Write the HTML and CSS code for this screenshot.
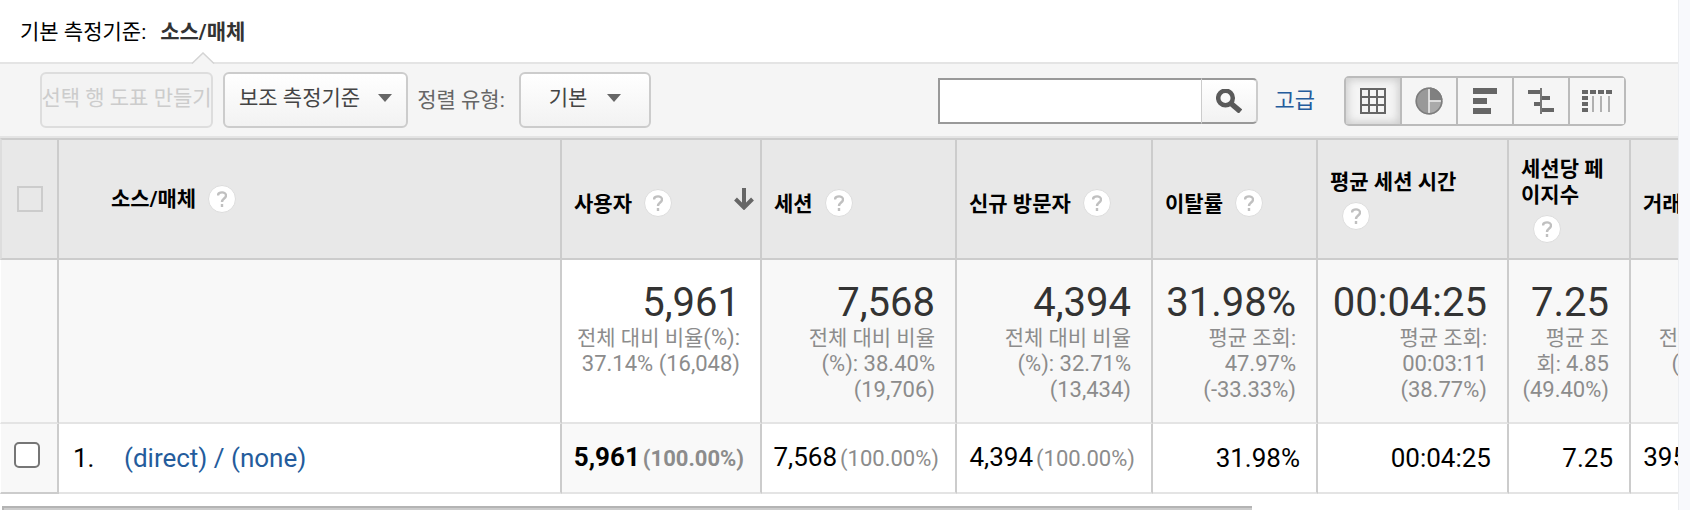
FILE: index.html
```html
<!DOCTYPE html>
<html lang="ko">
<head>
<meta charset="utf-8">
<title>소스/매체</title>
<link rel="stylesheet" href="styles.css">
</head>
<body>
<main class="panel">
  <nav class="dimensions">
    <span>기본 측정기준:</span>
    <strong class="dimension-active">소스/매체
      <svg class="notch" viewBox="0 0 24 12" width="24" height="12" aria-hidden="true"><path d="M1 12L12 1l11 11z" fill="#f5f5f5"/><path d="M1 11.500L12 1l11 10.500" fill="none" stroke="#d4d4d4" stroke-width="1.500"/></svg>
    </strong>
  </nav>

  <div class="toolbar">
    <button class="btn btn-plot" type="button" disabled>선택 행 도표 만들기</button>
    <button class="btn btn-menu" type="button">보조 측정기준
      <svg viewBox="0 0 14 8" width="14" height="8" aria-hidden="true"><path d="M0 0h14L7 8z" fill="#666"/></svg>
    </button>
    <label class="sort-label" for="sort">정렬 유형:</label>
    <div class="select-wrap">
      <select class="btn select" id="sort"><option>기본</option></select>
      <svg class="select-caret" viewBox="0 0 14 8" width="14" height="8" aria-hidden="true"><path d="M0 0h14L7 8z" fill="#666"/></svg>
    </div>
    <form class="search">
      <input class="search-input" type="text" aria-label="검색">
      <button class="search-btn" type="button" aria-label="검색">
        <svg viewBox="0 0 26 24" width="26" height="24" aria-hidden="true"><circle cx="9.500" cy="9" r="7.300" fill="none" stroke="#5a5a5a" stroke-width="4.500"/><path d="M15 14.500L24.500 22.500" stroke="#5a5a5a" stroke-width="5.500"/></svg>
      </button>
    </form>
    <a class="advanced" href="#">고급</a>
    <div class="views">
      <button class="view view-on" type="button" aria-label="표"><svg viewBox="0 0 26 26" width="26" height="26"><path d="M1 1h24v24H1zM9 1v24M17 1v24M1 9h24M1 17h24" fill="none" stroke="#666" stroke-width="2"/></svg></button>
      <button class="view" type="button" aria-label="비율"><svg viewBox="0 0 28 28" width="28" height="28"><circle cx="14" cy="14" r="13.500" fill="#999"/><path d="M14 14h13.500A13.500 13.500 0 0 1 14 27.500z" fill="#aaa"/><path d="M15 .500A13.500 13.500 0 0 1 27.500 13H15z" fill="#808080"/><path d="M14 2v24M14 14h13" stroke="#f0f0f0" stroke-width="1.500"/><circle cx="14" cy="14" r="12.700" fill="none" stroke="#7d7d7d" stroke-width="1.500"/></svg></button>
      <button class="view" type="button" aria-label="실적"><svg viewBox="0 0 26 26" width="26" height="26"><path d="M1 0h24v6H1zM1 10h14v6H1zM1 20h18v6H1z" fill="#666"/></svg></button>
      <button class="view" type="button" aria-label="비교"><svg viewBox="0 0 28 26" width="28" height="26"><path d="M1 2h13v4H1zM14 8h9v4h-9zM7 14h7v4H7zM14 20h13v4H14z" fill="#666"/><path d="M14 0v26" stroke="#777" stroke-width="2"/></svg></button>
      <button class="view" type="button" aria-label="피벗"><svg viewBox="0 0 30 24" width="30" height="24"><path d="M0 1h6v4H0zM8 1h6v4H8zM16 1h6v4h-6zM24 1h6v4h-6zM0 7h6v4H0zM0 13h6v4H0zM0 19h6v4H0z" fill="#666"/><path d="M11 7v16M19 7v16M27 7v16" stroke="#b0b0b0" stroke-width="2"/></svg></button>
    </div>
  </div>

  <table class="report">
    <colgroup>
      <col class="c-check"><col><col class="c-users"><col class="c-sessions"><col class="c-new"><col class="c-bounce"><col class="c-time"><col class="c-pages"><col class="c-trans">
    </colgroup>
    <thead>
      <tr>
        <th class="check-cell"><input class="check-all" type="checkbox" aria-label="모두 선택" disabled></th>
        <th class="source-head"><div class="head-row">소스/매체 <span class="help"><svg viewBox="0 0 10 16" width="10" height="16"><path d="M1 4.500C1 .500 9 .200 9 4.500 9 7.500 5 7.500 5 11M5 13v3" fill="none" stroke="#c0c0c0" stroke-width="2.400"/></svg></span></div></th>
        <th><div class="head-row head-sorted"><div>사용자<span class="help"><svg viewBox="0 0 10 16" width="10" height="16"><path d="M1 4.500C1 .500 9 .200 9 4.500 9 7.500 5 7.500 5 11M5 13v3" fill="none" stroke="#c0c0c0" stroke-width="2.400"/></svg></span></div>
          <svg class="sort-arrow" viewBox="0 0 20 22" width="20" height="22"><path d="M10 0v18M1.500 11L10 19.500 18.500 11" fill="none" stroke="#666" stroke-width="4"/></svg></div></th>
        <th>세션<span class="help"><svg viewBox="0 0 10 16" width="10" height="16"><path d="M1 4.500C1 .500 9 .200 9 4.500 9 7.500 5 7.500 5 11M5 13v3" fill="none" stroke="#c0c0c0" stroke-width="2.400"/></svg></span></th>
        <th>신규 방문자<span class="help"><svg viewBox="0 0 10 16" width="10" height="16"><path d="M1 4.500C1 .500 9 .200 9 4.500 9 7.500 5 7.500 5 11M5 13v3" fill="none" stroke="#c0c0c0" stroke-width="2.400"/></svg></span></th>
        <th>이탈률<span class="help"><svg viewBox="0 0 10 16" width="10" height="16"><path d="M1 4.500C1 .500 9 .200 9 4.500 9 7.500 5 7.500 5 11M5 13v3" fill="none" stroke="#c0c0c0" stroke-width="2.400"/></svg></span></th>
        <th>평균 세션 시간<br><span class="help"><svg viewBox="0 0 10 16" width="10" height="16"><path d="M1 4.500C1 .500 9 .200 9 4.500 9 7.500 5 7.500 5 11M5 13v3" fill="none" stroke="#c0c0c0" stroke-width="2.400"/></svg></span></th>
        <th>세션당 페<br>이지수<br><span class="help"><svg viewBox="0 0 10 16" width="10" height="16"><path d="M1 4.500C1 .500 9 .200 9 4.500 9 7.500 5 7.500 5 11M5 13v3" fill="none" stroke="#c0c0c0" stroke-width="2.400"/></svg></span></th>
        <th>거래<span class="help"><svg viewBox="0 0 10 16" width="10" height="16"><path d="M1 4.500C1 .500 9 .200 9 4.500 9 7.500 5 7.500 5 11M5 13v3" fill="none" stroke="#c0c0c0" stroke-width="2.400"/></svg></span></th>
      </tr>
    </thead>
    <tbody>
      <tr class="summary">
        <td></td>
        <td></td>
        <td class="sorted"><div class="total">5,961</div><div class="note">전체 대비 비율<span class="num">(%):</span><br><span class="num">37.14% (16,048)</span></div></td>
        <td><div class="total">7,568</div><div class="note">전체 대비 비율<br><span class="num">(%): 38.40%<br>(19,706)</span></div></td>
        <td><div class="total">4,394</div><div class="note">전체 대비 비율<br><span class="num">(%): 32.71%<br>(13,434)</span></div></td>
        <td><div class="total">31.98%</div><div class="note">평균 조회:<br><span class="num">47.97%<br>(-33.33%)</span></div></td>
        <td><div class="total">00:04:25</div><div class="note">평균 조회:<br><span class="num">00:03:11<br>(38.77%)</span></div></td>
        <td><div class="total">7.25</div><div class="note">평균 조<br>회: <span class="num">4.85<br>(49.40%)</span></div></td>
        <td><div class="total">&nbsp;</div><div class="note">전체 대비 비율<br><span class="num">(%): 38.40%</span></div></td>
      </tr>
      <tr class="entry">
        <td class="check-cell"><input class="check-row" type="checkbox" aria-label="(direct) / (none)"></td>
        <td class="source"><span class="index">1.</span><a href="#">(direct) / (none)</a></td>
        <td class="sorted">5,961<span class="share">(100.00%)</span></td>
        <td>7,568<span class="share">(100.00%)</span></td>
        <td>4,394<span class="share">(100.00%)</span></td>
        <td>31.98%</td>
        <td>00:04:25</td>
        <td>7.25</td>
        <td>395<span class="share">(100.00%)</span></td>
      </tr>
    </tbody>
  </table>
  <div class="scrollbar"></div>
</main>
</body>
</html>
```
FILE: styles.css
```css
* { box-sizing: border-box; }

body {
  margin: 0;
  background: #f8f9fc;
  color: #000;
  font-family: Roboto, "Noto Sans CJK KR", sans-serif;
  font-size: 21px;
  line-height: 26px;
}

button, input, select { margin: 0; padding: 0; font: inherit; color: inherit; }
a { color: #245c9c; text-decoration: none; }
svg { display: block; flex: none; }

.panel {
  margin-right: 11px;
  border-right: 1px solid #eceef1;
  background: #fff;
  overflow: hidden;
}

.dimensions {
  display: flex;
  align-items: center;
  gap: 14px;
  height: 62px;
  padding: 2px 0 0 20px;
}
.dimension-active {
  position: relative;
  display: flex;
  align-items: center;
  align-self: stretch;
  color: #333;
}
.notch { position: absolute; bottom: -2px; left: 50%; margin-left: -12px; }

.toolbar {
  display: flex;
  align-items: center;
  height: 76px;
  padding: 0 52px 0 40px;
  border-top: 2px solid #e4e4e4;
  border-bottom: 2px solid #e4e4e4;
  background: #f5f5f5;
}
.btn {
  display: flex;
  align-items: center;
  height: 56px;
  padding-bottom: 4px;
  border: 2px solid #ccc;
  border-radius: 6px;
  background: linear-gradient(#fff, #f2f2f2);
  color: #444;
  white-space: nowrap;
}
.btn-plot {
  justify-content: center;
  width: 173px;
  margin-right: 10px;
  border-color: #ddd;
  background: #f3f3f3;
  color: #ccc;
}
.btn-menu { gap: 18px; padding-left: 14px; padding-right: 14px; }
.sort-label { margin: 0 14px 0 9px; color: #666; }
.select-wrap { position: relative; }
.select {
  appearance: none;
  width: 132px;
  padding-left: 28px;
}
.select-caret { position: absolute; right: 30px; top: 22px; pointer-events: none; }

.search { display: flex; height: 46px; margin-left: auto; }
.search-input {
  width: 263px;
  border: 2px solid #999;
  border-right: 0;
  border-radius: 0;
  background: #fff;
}
.search-btn {
  display: flex;
  align-items: center;
  justify-content: center;
  width: 57px;
  border: 2px solid #999;
  border-left: 1px solid #ccc;
  border-right-color: #ccc;
  border-radius: 0 5px 5px 0;
  background: linear-gradient(#fff, #f2f2f2);
}
.advanced { margin: 0 29px 0 17px; font-size: 22px; }

.views {
  display: flex;
  height: 50px;
  border: 2px solid #bbb;
  border-radius: 5px;
}
.search, .advanced, .views { margin-top: 2px; }
.view {
  display: flex;
  align-items: center;
  justify-content: center;
  width: 56px;
  border: 0;
  border-right: 2px solid #bbb;
  background: #f5f5f5;
}
.view:last-child { width: 54px; border-right: 0; }
.view-on { box-shadow: inset 0 0 8px 2px #ccc; }

.report {
  width: calc(100% + 129px);
  border-collapse: separate;
  border-spacing: 0;
  table-layout: fixed;
}
.c-check { width: 59px; }
.c-users { width: 200px; }
.c-sessions { width: 195px; }
.c-new { width: 196px; }
.c-bounce { width: 165px; }
.c-time { width: 191px; }
.c-pages { width: 122px; }
.c-trans { width: 176px; }

th, td { border-right: 2px solid #ccc; }
th {
  height: 122px;
  padding: 0 6px 0 12px;
  border-top: 2px solid #ccc;
  border-bottom: 2px solid #ccc;
  background: #e8e8e8;
  text-align: left;
  vertical-align: middle;
  white-space: nowrap;
}
th:first-child { border-left: 2px solid #ddd; }
td:first-child { border-left: 1px solid #fff; }
.head-row { display: flex; align-items: center; }
.head-sorted { justify-content: space-between; }
.source-head { padding-left: 52px; }
.source-head .help { margin-top: 0; }
.help {
  display: inline-flex;
  align-items: center;
  justify-content: center;
  width: 28px;
  height: 28px;
  margin: 7px 0 0 12px;
  border: 1px solid #ddd;
  border-radius: 50%;
  background: #fff;
  vertical-align: baseline;
}

.check-cell { padding: 0; text-align: left; }
.check-cell input { appearance: none; display: block; width: 26px; height: 26px; }
.check-all { margin-left: 15px; border: 2px solid #ccc; }
.check-row { margin-left: 13px; border: 2px solid #767676; border-radius: 5px; background: #fff; }

.summary td {
  padding: 21px 20px 19px 10px;
  border-bottom: 2px solid #e4e4e4;
  background: #f8f8f8;
  text-align: right;
  vertical-align: top;
  white-space: nowrap;
}
.summary .sorted { background: #fff; }
.total { color: #333; font-size: 40px; line-height: 44px; }
.note { color: #8c8c8c; }
.num { font-size: 22px; }

.entry td {
  height: 70px;
  padding: 0 16px 0 0;
  border-bottom: 2px solid #e4e4e4;
  font-size: 26px;
  text-align: right;
  white-space: nowrap;
}
.entry .check-cell { padding: 0 0 6px; border-bottom-color: #ccc; background: #f8f8f8; }
.entry .source { padding-left: 14px; text-align: left; }
.entry .sorted { background: #f9f9f9; font-weight: 700; }
.index { display: inline-block; width: 51px; }
.share { margin-left: 3px; color: #8c8c8c; font-size: 22px; }

.scrollbar {
  width: 74.5%;
  height: 4px;
  margin: 12px 0 0 2px;
  border-top: 2px solid #b4b4b4;
  border-left: 2px solid #b4b4b4;
  background: #ccc;
}
```
